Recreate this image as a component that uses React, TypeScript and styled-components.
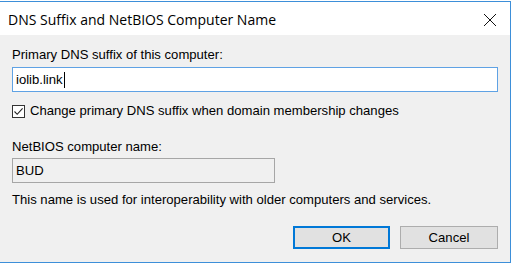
import React from "react";
import styled, { createGlobalStyle } from "styled-components";

const GlobalStyle = createGlobalStyle`
  html, body {
    margin: 0;
    padding: 0;
    background: #ffffff;
  }
  body {
    font-family: "Liberation Sans", Arial, sans-serif;
  }
`;

const Screen = styled.div`
  width: 514px;
  height: 264px;
  padding-top: 1px;
  box-sizing: border-box;
  background: #ffffff;
`;

const Window = styled.div`
  width: 511px;
  height: 262px;
  box-sizing: border-box;
  border-top: 1px solid #3d8fd9;
  border-right: 1px solid #3d8fd9;
  border-bottom: 1px solid #3d8fd9;
  display: flex;
  flex-direction: column;
`;

const TitleBar = styled.div`
  height: 33px;
  background: #ffffff;
  display: flex;
  align-items: center;
  justify-content: space-between;
  padding: 0 13px 0 8px;
  flex-shrink: 0;
`;

const Title = styled.span`
  font-family: "Open Sans", "Noto Sans", sans-serif;
  font-size: 14px;
  color: #000000;
  margin-top: 1px;
`;

const CloseButton = styled.span`
  display: flex;
  width: 14px;
  height: 14px;
  margin-top: 2px;
`;

const Body = styled.div`
  flex: 1;
  background: #f0f0f0;
  padding: 12px 12px 13px 12px;
  display: flex;
  flex-direction: column;
  font-size: 13.1px;
  line-height: 15px;
  color: #000000;
`;

const Label = styled.div<{ top?: number }>`
  margin-top: ${(p) => p.top ?? 0}px;
  height: 15px;
  white-space: nowrap;
`;

const TextBox = styled.div<{ focused?: boolean; width?: number; top: number }>`
  margin-top: ${(p) => p.top}px;
  height: 25px;
  width: ${(p) => (p.width ? `${p.width}px` : "auto")};
  box-sizing: border-box;
  border: 1px solid ${(p) => (p.focused ? "#5fa2e4" : "#a6a6a6")};
  background: ${(p) => (p.focused ? "#ffffff" : "#f0f0f0")};
  display: flex;
  align-items: center;
  padding-left: 3px;
`;

const Caret = styled.span`
  display: inline-block;
  width: 1px;
  height: 16px;
  background: #000000;
  margin-left: 1px;
`;

const CheckRow = styled.label`
  margin-top: 11px;
  height: 15px;
  display: flex;
  align-items: flex-start;
  gap: 5px;
  white-space: nowrap;
`;

const CheckBox = styled.span`
  width: 13px;
  height: 13px;
  box-sizing: border-box;
  margin-top: 2px;
  border: 1px solid #333333;
  background: #ffffff;
  display: flex;
  align-items: center;
  justify-content: center;
`;

const Buttons = styled.div`
  margin-top: 19px;
  display: flex;
  justify-content: flex-end;
  gap: 10px;
`;

const Button = styled.button<{ primary?: boolean; width: number }>`
  width: ${(p) => p.width}px;
  height: 23px;
  box-sizing: border-box;
  background: #e1e1e1;
  border: ${(p) => (p.primary ? "2px solid #0078d7" : "1px solid #adadad")};
  font-family: "Liberation Sans", Arial, sans-serif;
  font-size: 13.1px;
  color: #000000;
  padding: 0;
  margin: 0;
  border-radius: 0;
  display: flex;
  align-items: center;
  justify-content: center;
`;

export default function App() {
  return (
    <>
      <GlobalStyle />
      <Screen>
        <Window>
          <TitleBar>
            <Title>DNS Suffix and NetBIOS Computer Name</Title>
            <CloseButton>
              <svg width="14" height="14" viewBox="0 0 14 14">
                <path d="M1 1 L13 13 M13 1 L1 13" stroke="#111" strokeWidth="1" fill="none" />
              </svg>
            </CloseButton>
          </TitleBar>
          <Body>
            <Label>Primary DNS suffix of this computer:</Label>
            <TextBox focused top={5}>
              iolib.link
              <Caret />
            </TextBox>
            <CheckRow>
              <CheckBox>
                <svg width="11" height="11" viewBox="0 0 11 11">
                  <path d="M1.5 5.5 L4.2 8.3 L9.6 2.4" stroke="#222" strokeWidth="1.1" fill="none" />
                </svg>
              </CheckBox>
              Change primary DNS suffix when domain membership changes
            </CheckRow>
            <Label top={21}>NetBIOS computer name:</Label>
            <TextBox top={4} width={263}>
              BUD
            </TextBox>
            <Label top={9}>
              This name is used for interoperability with older computers and services.
            </Label>
            <Buttons>
              <Button primary width={97}>OK</Button>
              <Button width={98}>Cancel</Button>
            </Buttons>
          </Body>
        </Window>
      </Screen>
    </>
  );
}
